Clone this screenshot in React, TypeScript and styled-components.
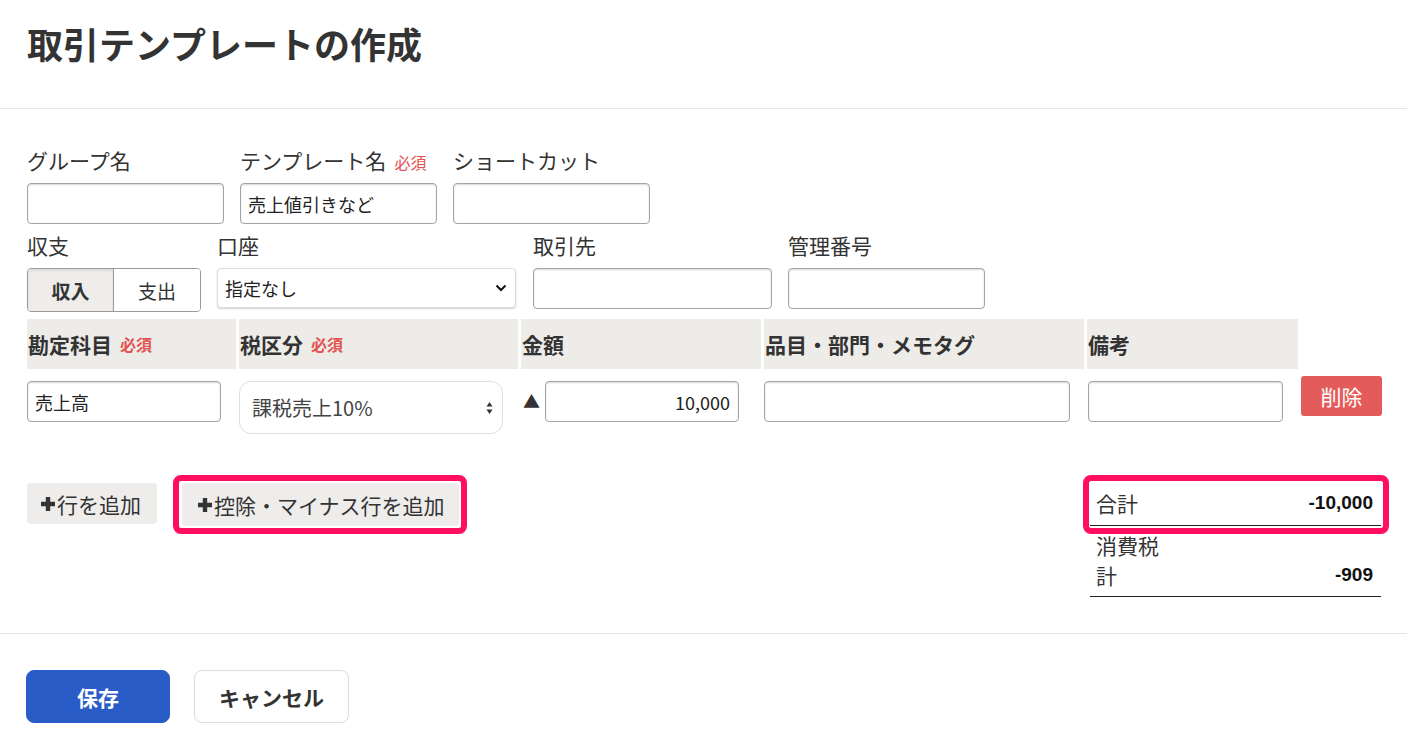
import styled, { createGlobalStyle } from "styled-components";

const GlobalStyle = createGlobalStyle`
  * { box-sizing: border-box; }
  body {
    margin: 0;
    background: #fff;
    color: #333;
    font-family: "Noto Sans CJK JP", "Noto Sans", sans-serif;
  }
`;

const Header = styled.header`
  height: 109px;
  padding: 23px 27px 0;
  border-bottom: 1px solid #e6e6e6;
`;

const Title = styled.h1`
  margin: 0;
  font-size: 36px;
  line-height: 40px;
  font-weight: 700;
  color: #333;
`;

const Body = styled.section`
  padding: 36px 26px 36px 27px;
  border-bottom: 1px solid #e6e6e6;
`;

const FieldRow = styled.div<{ $gap?: number; $mb?: number }>`
  display: flex;
  align-items: flex-start;
  gap: ${(p) => p.$gap ?? 16}px;
  margin-bottom: ${(p) => p.$mb ?? 7}px;
`;

const Field = styled.div<{ $w: number }>`
  width: ${(p) => p.$w}px;
  display: flex;
  flex-direction: column;
`;

const Label = styled.label`
  display: flex;
  align-items: baseline;
  gap: 8px;
  height: 30px;
  margin-bottom: 8px;
  font-size: 21px;
  line-height: 30px;
  color: #333;
  white-space: nowrap;
`;

const Required = styled.span<{ $bold?: boolean }>`
  font-size: 16px;
  color: #e25454;
  font-weight: ${(p) => (p.$bold ? 700 : 400)};
`;

const TextInput = styled.input<{ $w: number; $right?: boolean }>`
  width: ${(p) => p.$w}px;
  height: 41px;
  padding: 0 8px 0 7px;
  border: 1px solid #a5a5a5;
  border-radius: 4px;
  box-shadow: inset 0 1px 2px rgba(0, 0, 0, 0.16);
  font-family: inherit;
  font-size: 18px;
  color: #222;
  text-align: ${(p) => (p.$right ? "right" : "left")};
  outline: none;
`;

const Toggle = styled.div`
  display: flex;
  width: 174px;
  height: 44px;
  border: 1px solid #9a9a9a;
  border-radius: 4px;
  overflow: hidden;
`;

const ToggleItem = styled.button<{ $active?: boolean }>`
  flex: ${(p) => (p.$active ? "0 0 86px" : "1")};
  border: none;
  border-right: ${(p) => (p.$active ? "1px solid #9a9a9a" : "none")};
  background: ${(p) => (p.$active ? "#eeedea" : "#fff")};
  box-shadow: ${(p) => (p.$active ? "inset 0 2px 3px rgba(0,0,0,0.08)" : "none")};
  font-family: inherit;
  font-size: 19px;
  font-weight: ${(p) => (p.$active ? 700 : 400)};
  color: #333;
  padding: 0;
`;

const SelectWrap = styled.div<{ $w: number }>`
  position: relative;
  width: ${(p) => p.$w}px;
`;

const AccountSelect = styled.select`
  appearance: none;
  width: 100%;
  height: 40px;
  padding: 0 30px 0 7px;
  border: 1px solid #dcdcdc;
  border-radius: 4px;
  box-shadow: 0 1px 2px rgba(0, 0, 0, 0.18);
  background: #fff;
  font-family: inherit;
  font-size: 18px;
  color: #222;
`;

const TaxSelect = styled.select`
  appearance: none;
  width: 100%;
  height: 53px;
  padding: 0 30px 0 12px;
  border: 1px solid #dedede;
  border-radius: 12px;
  background: #fff;
  font-family: inherit;
  font-size: 20px;
  color: #444;
`;

const SelectIcon = styled.span<{ $right: number }>`
  position: absolute;
  top: 50%;
  right: ${(p) => p.$right}px;
  transform: translateY(-50%);
  display: flex;
  pointer-events: none;
`;

const Table = styled.div`
  display: grid;
  grid-template-columns: 209px 279px 240px 320px 211px 1fr;
  column-gap: 3px;
`;

const HeadCell = styled.div<{ $blank?: boolean }>`
  height: 50px;
  margin-bottom: 12px;
  padding-left: 1px;
  display: flex;
  align-items: center;
  gap: 8px;
  background: ${(p) => (p.$blank ? "transparent" : "#eeece8")};
  font-size: 21px;
  font-weight: 700;
  color: #333;
  white-space: nowrap;
`;

const Cell = styled.div`
  display: flex;
  align-items: flex-start;
`;

const AmountCell = styled(Cell)`
  gap: 5px;
  padding-left: 2px;
`;

const Triangle = styled.span`
  font-size: 17px;
  line-height: 39px;
  color: #333;
`;

const DeleteButton = styled.button`
  width: 81px;
  height: 40px;
  margin-top: -5px;
  border: none;
  border-radius: 3px;
  background: #e35c5b;
  color: #fff;
  font-family: inherit;
  font-size: 21px;
`;

const Actions = styled.div`
  display: flex;
  justify-content: space-between;
  align-items: flex-start;
  margin-top: 49px;
`;

const AddButtons = styled.div`
  display: flex;
  align-items: flex-start;
  gap: 25px;
`;

const AddButton = styled.button<{ $marked?: boolean }>`
  position: relative;
  display: flex;
  align-items: center;
  gap: 1px;
  height: ${(p) => (p.$marked ? 43 : 41)}px;
  padding: 0 ${(p) => (p.$marked ? "14px 0 15px" : "16px 0 13px")};
  border: none;
  border-radius: 4px;
  background: #eeedeb;
  font-family: inherit;
  font-size: 21px;
  color: #333;

  ${(p) =>
    p.$marked &&
    `
    &::after {
      content: "";
      position: absolute;
      inset: -8px -8px -8px -9px;
      border: 6px solid #ff0f5e;
      border-radius: 8px;
    }
  `}
`;

const Summary = styled.div`
  width: 291px;
`;

const SummaryRow = styled.div<{ $marked?: boolean }>`
  position: relative;
  display: flex;
  justify-content: space-between;
  align-items: flex-end;
  padding: ${(p) => (p.$marked ? "5px 8px 7px 6px" : "4px 8px 6px 6px")};
  border-bottom: 1px solid #222;

  ${(p) =>
    p.$marked &&
    `
    &::after {
      content: "";
      position: absolute;
      inset: -8px -8px -9px -7px;
      border: 6px solid #ff0f5e;
      border-radius: 8px;
    }
  `}
`;

const SummaryLabel = styled.span`
  width: 66px;
  font-size: 21px;
  line-height: 30px;
  color: #333;
`;

const SummaryValue = styled.span`
  font-family: "Liberation Sans", Arial, sans-serif;
  font-size: 19px;
  line-height: 30px;
  font-weight: 700;
  color: #111;
`;

const Footer = styled.footer`
  display: flex;
  gap: 24px;
  padding: 36px 26px;
`;

const FooterButton = styled.button<{ $primary?: boolean }>`
  width: ${(p) => (p.$primary ? 144 : 155)}px;
  height: 53px;
  border: 1px solid ${(p) => (p.$primary ? "#2a5cc8" : "#dcdcdc")};
  border-radius: 8px;
  background: ${(p) => (p.$primary ? "#2a5cc8" : "#fff")};
  color: ${(p) => (p.$primary ? "#fff" : "#333")};
  font-family: inherit;
  font-size: 21px;
  font-weight: 700;
`;

function Plus() {
  return (
    <svg width="16" height="16" viewBox="0 0 16 16">
      <path d="M8 1v14M1 8h14" stroke="#333" strokeWidth="4.4" />
    </svg>
  );
}

function Chevron() {
  return (
    <svg width="12" height="8" viewBox="0 0 12 8">
      <path d="M1.5 1.5 6 6l4.5-4.5" fill="none" stroke="#111" strokeWidth="2" />
    </svg>
  );
}

function Stepper() {
  return (
    <svg width="7" height="14" viewBox="0 0 7 14">
      <path d="M3.5 1 6.5 5.5h-6zM3.5 13 .5 8.5h6z" fill="#333" />
    </svg>
  );
}

export default function App() {
  return (
    <>
      <GlobalStyle />
      <Header>
        <Title>取引テンプレートの作成</Title>
      </Header>

      <Body>
        <FieldRow $mb={6}>
          <Field $w={197}>
            <Label>グループ名</Label>
            <TextInput $w={197} />
          </Field>
          <Field $w={197}>
            <Label>
              テンプレート名<Required>必須</Required>
            </Label>
            <TextInput $w={197} defaultValue="売上値引きなど" />
          </Field>
          <Field $w={197}>
            <Label>ショートカット</Label>
            <TextInput $w={197} />
          </Field>
        </FieldRow>

        <FieldRow $gap={16} $mb={7}>
          <Field $w={174}>
            <Label>収支</Label>
            <Toggle>
              <ToggleItem $active>収入</ToggleItem>
              <ToggleItem>支出</ToggleItem>
            </Toggle>
          </Field>
          <Field $w={299}>
            <Label>口座</Label>
            <SelectWrap $w={299}>
              <AccountSelect defaultValue="none">
                <option value="none">指定なし</option>
              </AccountSelect>
              <SelectIcon $right={9}>
                <Chevron />
              </SelectIcon>
            </SelectWrap>
          </Field>
          <Field $w={239} style={{ marginLeft: 1 }}>
            <Label>取引先</Label>
            <TextInput $w={239} />
          </Field>
          <Field $w={197}>
            <Label>管理番号</Label>
            <TextInput $w={197} />
          </Field>
        </FieldRow>

        <Table>
          <HeadCell>
            勘定科目<Required $bold>必須</Required>
          </HeadCell>
          <HeadCell>
            税区分<Required $bold>必須</Required>
          </HeadCell>
          <HeadCell>金額</HeadCell>
          <HeadCell>品目・部門・メモタグ</HeadCell>
          <HeadCell>備考</HeadCell>
          <HeadCell $blank />

          <Cell>
            <TextInput $w={194} defaultValue="売上高" />
          </Cell>
          <Cell>
            <SelectWrap $w={264}>
              <TaxSelect defaultValue="10">
                <option value="10">課税売上10%</option>
              </TaxSelect>
              <SelectIcon $right={10}>
                <Stepper />
              </SelectIcon>
            </SelectWrap>
          </Cell>
          <AmountCell>
            <Triangle>▲</Triangle>
            <TextInput $w={194} $right defaultValue="10,000" />
          </AmountCell>
          <Cell>
            <TextInput $w={306} />
          </Cell>
          <Cell>
            <TextInput $w={195} style={{ marginLeft: 1 }} />
          </Cell>
          <Cell>
            <DeleteButton>削除</DeleteButton>
          </Cell>
        </Table>

        <Actions>
          <AddButtons>
            <AddButton>
              <Plus />
              行を追加
            </AddButton>
            <AddButton $marked>
              <Plus />
              控除・マイナス行を追加
            </AddButton>
          </AddButtons>

          <Summary>
            <SummaryRow $marked>
              <SummaryLabel>合計</SummaryLabel>
              <SummaryValue>-10,000</SummaryValue>
            </SummaryRow>
            <SummaryRow>
              <SummaryLabel>消費税計</SummaryLabel>
              <SummaryValue>-909</SummaryValue>
            </SummaryRow>
          </Summary>
        </Actions>
      </Body>

      <Footer>
        <FooterButton $primary>保存</FooterButton>
        <FooterButton>キャンセル</FooterButton>
      </Footer>
    </>
  );
}
